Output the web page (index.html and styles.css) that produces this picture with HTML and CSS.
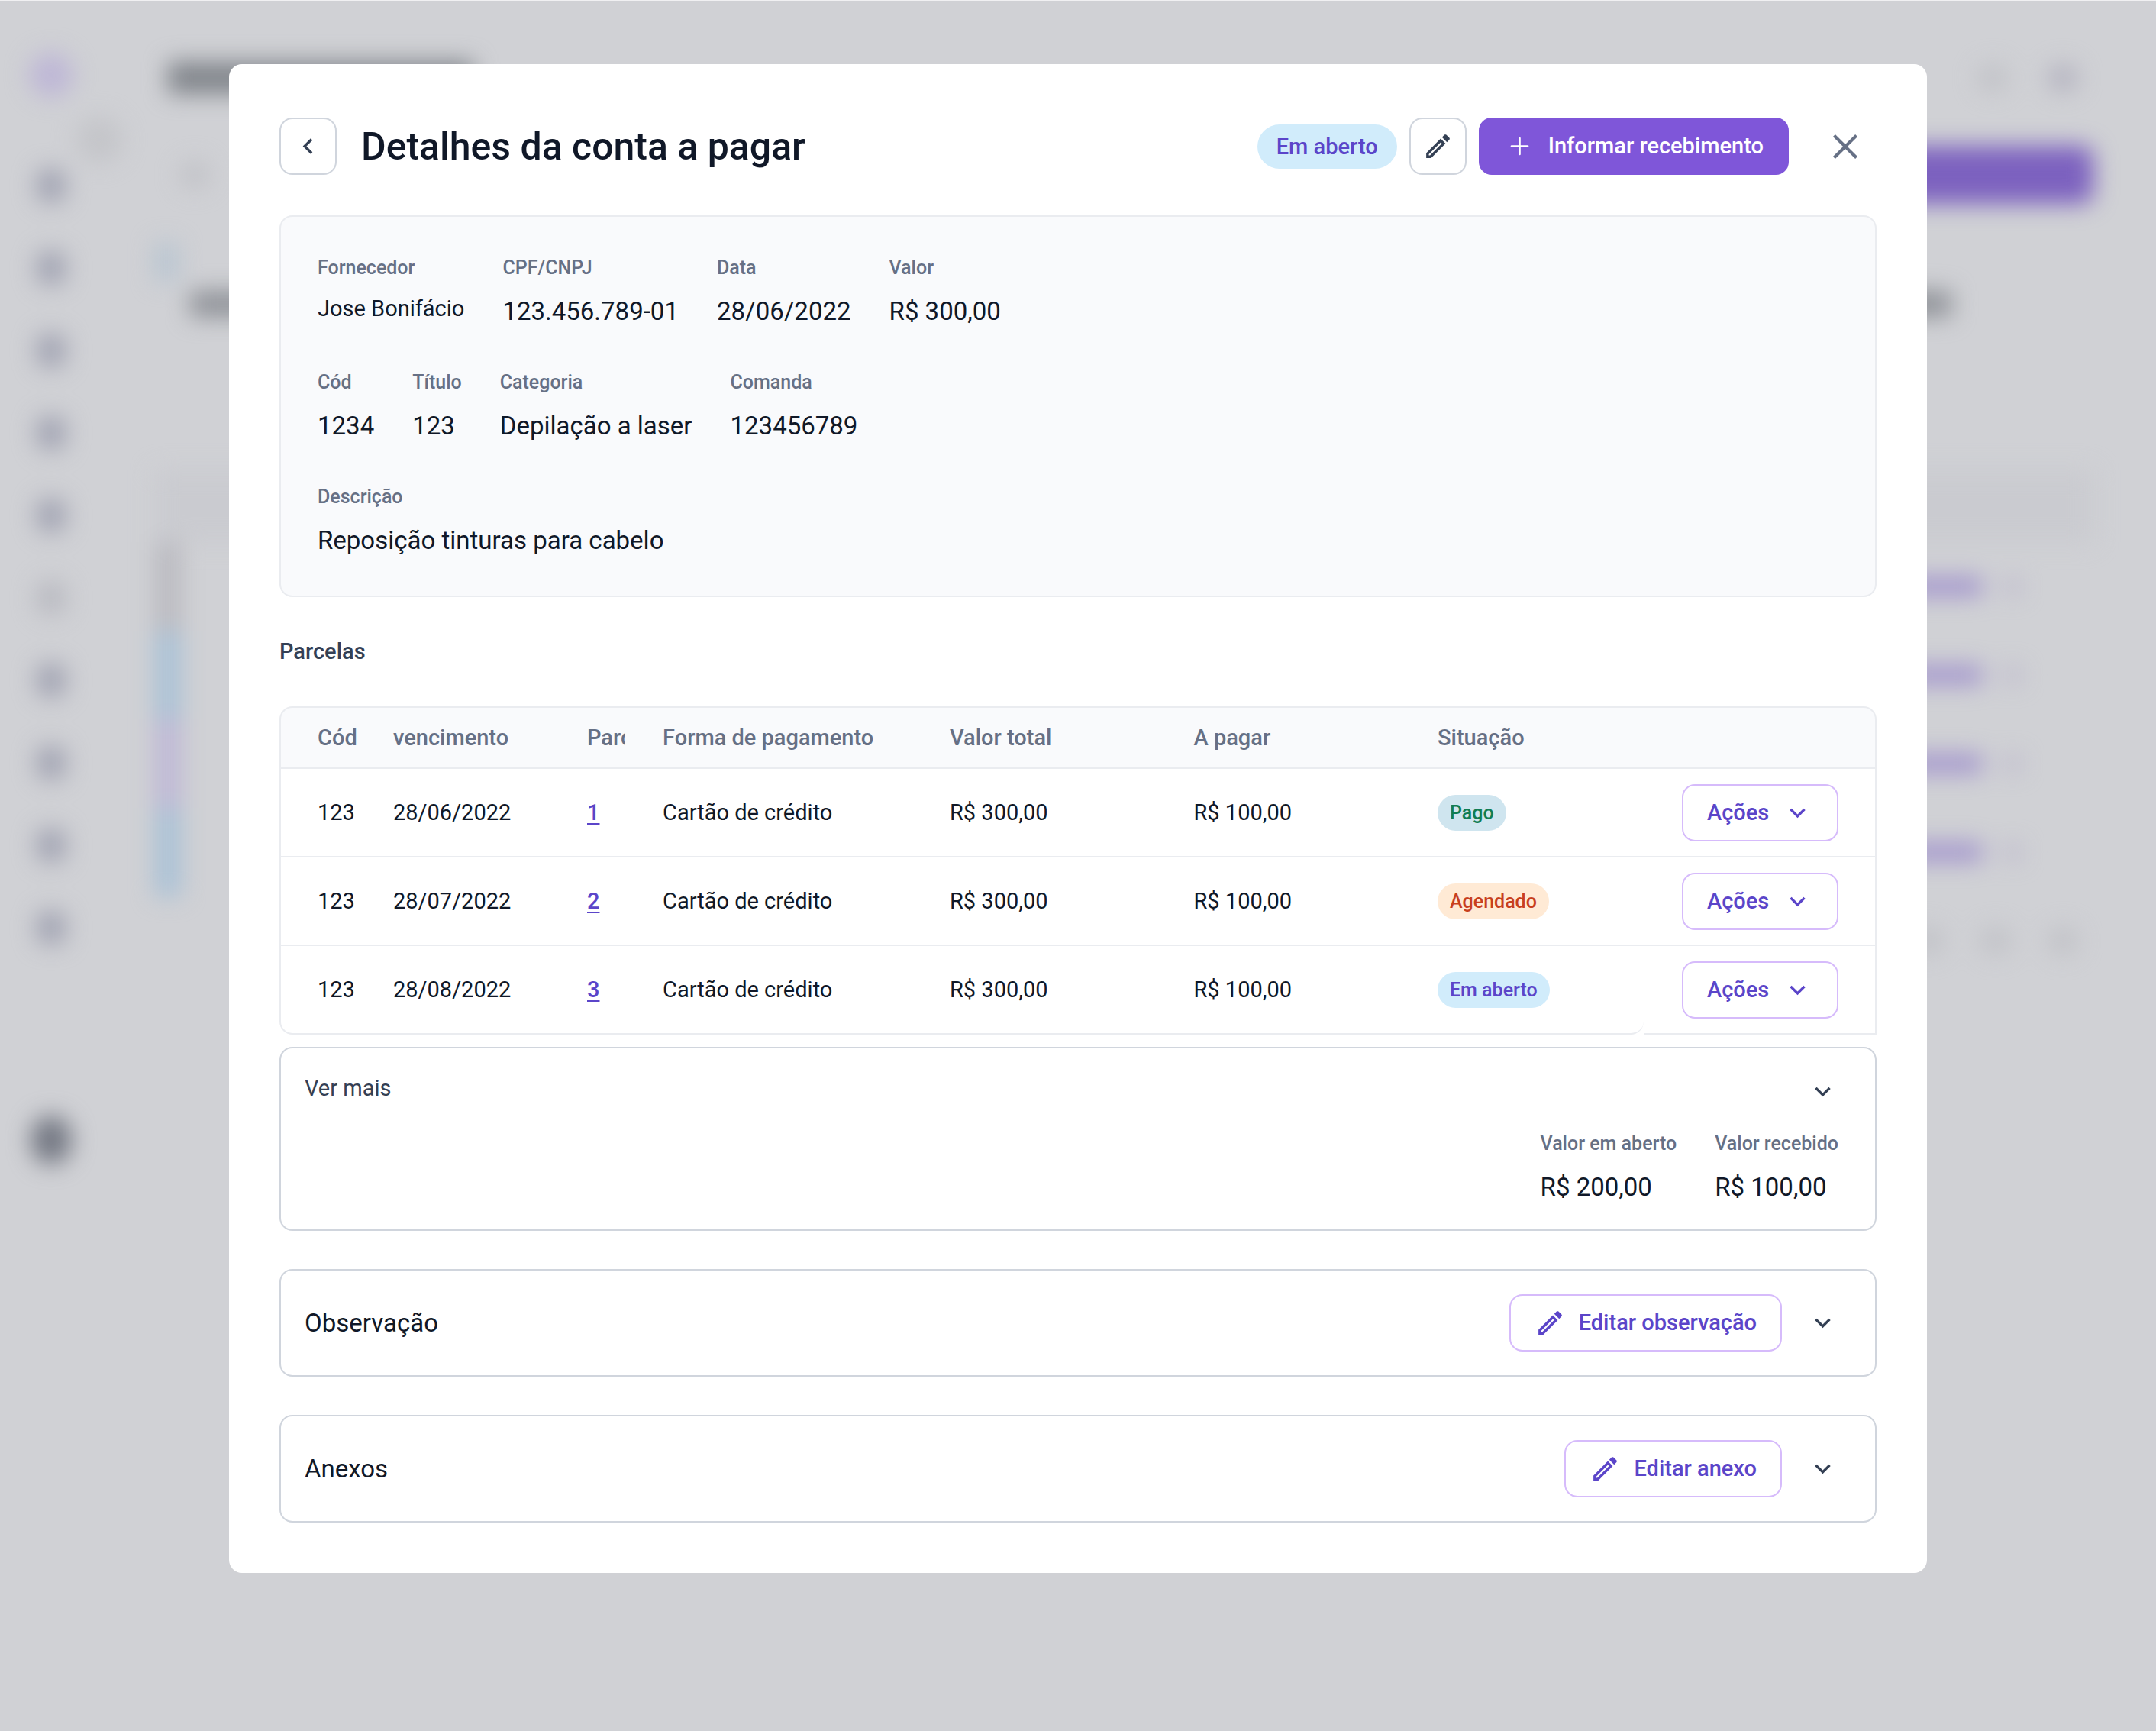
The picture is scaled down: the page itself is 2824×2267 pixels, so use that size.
FILE: index.html
```
<!DOCTYPE html>
<html lang="pt-BR">
  <head>
    <meta charset="UTF-8" />
    <meta name="viewport" content="width=device-width, initial-scale=1.0" />
    <title>Detalhes da conta a pagar</title>
    <link rel="stylesheet" href="styles.css">
  </head>
  <body>
    <!-- shared icons -->
    <svg class="sprite" aria-hidden="true">
      <symbol id="chevron" viewBox="0 0 24 24">
        <path d="M7.41 8.59 12 13.17l4.59-4.58L18 10l-6 6-6-6z" fill="currentColor" />
      </symbol>
      <symbol id="pencil" viewBox="0 0 24 24">
        <path d="M14.06 9.02l.92.92L5.92 19H5v-.92l9.06-9.06M17.66 3c-.25 0-.51.1-.7.29l-1.83 1.83 3.75 3.75 1.83-1.83c.39-.39.39-1.02 0-1.41l-2.34-2.34c-.2-.2-.45-.29-.71-.29zm-3.6 3.19L3 17.25V21h3.75L17.81 9.94l-3.75-3.75z" fill="currentColor" />
      </symbol>
    </svg>

    <div class="stage">
      <!-- page behind the dialog -->
      <div class="behind" aria-hidden="true">
        <div class="side">
          <i class="logo"></i>
          <i class="handle"></i>
          <i></i><i></i><i></i><i></i><i></i><i class="faint"></i><i></i><i></i><i></i><i></i>
          <i class="avatar"></i>
        </div>
        <div class="page">
          <div class="line topbar"><i class="heading"></i><span><i class="dot faint"></i><i class="dot"></i></span></div>
          <div class="line toolbar"><i class="dot faint"></i><i class="cta"></i></div>
          <div class="line summary"><span><i class="mark"></i><i class="amount"></i></span><i class="amount"></i></div>
          <div class="band"></div>
          <div class="line item"><i class="bar"></i><span><i class="action"></i><i class="tick"></i></span></div>
          <div class="line item"><i class="bar blue"></i><span><i class="action"></i><i class="tick"></i></span></div>
          <div class="line item"><i class="bar purple"></i><span><i class="action"></i><i class="tick"></i></span></div>
          <div class="line item"><i class="bar blue"></i><span><i class="action"></i><i class="tick"></i></span></div>
          <div class="line pager"><i class="dot faint"></i><i class="dot faint"></i><i class="dot faint"></i></div>
        </div>
      </div>

      <main class="modal" role="dialog" aria-labelledby="title">
        <header class="modal-header">
          <button type="button" class="icon-btn" aria-label="Voltar">
            <svg class="icon back"><use href="#chevron" /></svg>
          </button>
          <h1 id="title">Detalhes da conta a pagar</h1>
          <span class="badge badge-lg open">Em aberto</span>
          <button type="button" class="icon-btn" aria-label="Editar">
            <svg class="icon"><use href="#pencil" /></svg>
          </button>
          <button type="button" class="btn primary">
            <svg class="icon" viewBox="0 0 24 24"><path d="M12 5.8v12.4M5.8 12h12.4" stroke="currentColor" stroke-width="1.5" stroke-linecap="round" fill="none" /></svg>
            Informar recebimento
          </button>
          <button type="button" class="close" aria-label="Fechar">
            <svg viewBox="0 0 24 24"><path d="M5 5l14 14M19 5L5 19" stroke="currentColor" stroke-width="2" fill="none" /></svg>
          </button>
        </header>

        <section class="details">
          <dl class="fields">
            <div><dt>Fornecedor</dt><dd class="small">Jose Bonifácio</dd></div>
            <div><dt>CPF/CNPJ</dt><dd>123.456.789-01</dd></div>
            <div><dt>Data</dt><dd>28/06/2022</dd></div>
            <div><dt>Valor</dt><dd>R$ 300,00</dd></div>
          </dl>
          <dl class="fields">
            <div><dt>Cód</dt><dd>1234</dd></div>
            <div><dt>Título</dt><dd>123</dd></div>
            <div><dt>Categoria</dt><dd>Depilação a laser</dd></div>
            <div><dt>Comanda</dt><dd>123456789</dd></div>
          </dl>
          <dl class="fields">
            <div><dt>Descrição</dt><dd>Reposição tinturas para cabelo</dd></div>
          </dl>
        </section>

        <h2>Parcelas</h2>
        <table class="parcels">
          <colgroup>
            <col class="c-code"><col class="c-due"><col class="c-num"><col class="c-method"><col><col><col class="c-status"><col class="c-actions">
          </colgroup>
          <thead>
            <tr>
              <th>Cód</th>
              <th>vencimento</th>
              <th><span class="clip">Parcela</span></th>
              <th>Forma de pagamento</th>
              <th>Valor total</th>
              <th>A pagar</th>
              <th>Situação</th>
              <th></th>
            </tr>
          </thead>
          <tbody>
            <tr>
              <td>123</td>
              <td>28/06/2022</td>
              <td><a href="#">1</a></td>
              <td>Cartão de crédito</td>
              <td>R$ 300,00</td>
              <td>R$ 100,00</td>
              <td><span class="badge paid">Pago</span></td>
              <td><button type="button" class="btn outline">Ações <svg class="icon"><use href="#chevron" /></svg></button></td>
            </tr>
            <tr>
              <td>123</td>
              <td>28/07/2022</td>
              <td><a href="#">2</a></td>
              <td>Cartão de crédito</td>
              <td>R$ 300,00</td>
              <td>R$ 100,00</td>
              <td><span class="badge scheduled">Agendado</span></td>
              <td><button type="button" class="btn outline">Ações <svg class="icon"><use href="#chevron" /></svg></button></td>
            </tr>
            <tr>
              <td>123</td>
              <td>28/08/2022</td>
              <td><a href="#">3</a></td>
              <td>Cartão de crédito</td>
              <td>R$ 300,00</td>
              <td>R$ 100,00</td>
              <td><span class="badge open">Em aberto</span></td>
              <td><button type="button" class="btn outline">Ações <svg class="icon"><use href="#chevron" /></svg></button></td>
            </tr>
          </tbody>
        </table>

        <section class="panel more">
          <div class="more-head">
            <span>Ver mais</span>
            <button type="button" class="toggle" aria-label="Ver mais"><svg class="icon"><use href="#chevron" /></svg></button>
          </div>
          <dl class="fields totals">
            <div><dt>Valor em aberto</dt><dd>R$ 200,00</dd></div>
            <div><dt>Valor recebido</dt><dd>R$ 100,00</dd></div>
          </dl>
        </section>

        <section class="panel row">
          <h3>Observação</h3>
          <button type="button" class="btn outline"><svg class="icon"><use href="#pencil" /></svg> Editar observação</button>
          <button type="button" class="toggle" aria-label="Expandir observação"><svg class="icon"><use href="#chevron" /></svg></button>
        </section>

        <section class="panel row">
          <h3>Anexos</h3>
          <button type="button" class="btn outline"><svg class="icon"><use href="#pencil" /></svg> Editar anexo</button>
          <button type="button" class="toggle" aria-label="Expandir anexos"><svg class="icon"><use href="#chevron" /></svg></button>
        </section>
      </main>
    </div>
  </body>
</html>
```
FILE: styles.css
```
* {
  box-sizing: border-box;
}
body {
  margin: 0;
  font-family: Roboto, "Liberation Sans", sans-serif;
  font-size: 29px;
  line-height: 43px;
  color: #101828;
  background: #d0d1d5;
}
h1,
h2,
h3,
dl,
dd {
  margin: 0;
}
button {
  font: inherit;
  cursor: pointer;
}
.sprite {
  display: none;
}
.icon {
  display: block;
  width: 41px;
  height: 41px;
  flex: none;
}

/* dialog and page share one grid cell */
.stage {
  display: grid;
  min-height: 100vh;
  border-top: 1px solid #f0f0f2;
  border-bottom: 1px solid #e2e2e5;
}
.behind,
.modal {
  grid-area: 1 / 1;
}

/* page behind */
.behind {
  display: flex;
  overflow: hidden;
  filter: blur(15px);
}
.behind i {
  display: block;
  flex: none;
}
.side {
  position: relative;
  display: flex;
  flex-direction: column;
  align-items: center;
  gap: 64px;
  width: 134px;
  padding-top: 68px;
}
.side i {
  width: 38px;
  height: 44px;
  border-radius: 14px;
  background: #a1a3b2;
}
.side .logo {
  width: 58px;
  height: 58px;
  margin-bottom: 30px;
  border-radius: 50%;
  background: #beb7d6;
}
/* collapse handle on the sidebar edge */
.side .handle {
  position: absolute;
  top: 152px;
  right: -26px;
  width: 60px;
  height: 60px;
  border-radius: 50%;
  background: #c4c5c9;
}
.side .avatar {
  width: 54px;
  height: 64px;
  margin-top: 160px;
  border-radius: 50%;
  background: #747883;
}
.page {
  flex: 1;
  padding: 76px 82px 0 69px;
}
.line,
.line span {
  display: flex;
  align-items: center;
  justify-content: space-between;
}
.dot {
  width: 40px;
  height: 36px;
  border-radius: 50%;
  background: #b4b3c0;
}
.side .faint {
  background: #b9bac1;
}
.page .faint {
  background: #c1c2c7;
}
.topbar {
  height: 50px;
  padding: 0 20px 0 17px;
}
.topbar span {
  gap: 52px;
}
.heading {
  width: 400px;
  height: 42px;
  background: #81858b;
}
.toolbar {
  height: 76px;
  margin-top: 64px;
  padding-left: 32px;
}
.cta {
  width: 400px;
  height: 76px;
  border-radius: 16px;
  background: #7c61bf;
}
.summary {
  height: 104px;
  margin-top: 49px;
  padding-right: 186px;
}
.summary span {
  gap: 16px;
}
.mark {
  width: 30px;
  height: 50px;
  margin-bottom: 50px;
  background: #b8c5d1;
}
.amount {
  width: 100px;
  height: 34px;
  margin-top: 60px;
  background: #8e9197;
}
.band {
  height: 94px;
  margin-top: 196px;
  background: #cacbd0;
}
.item {
  height: 116px;
  padding-right: 96px;
}
.item span {
  gap: 30px;
}
.bar {
  width: 34px;
  height: 116px;
  background: #babac0;
}
.bar.blue {
  background: #a9c1d6;
}
.bar.purple {
  background: #beb8d6;
}
.action {
  width: 100px;
  height: 24px;
  background: #a092cc;
}
.tick {
  width: 20px;
  height: 20px;
  background: #bbb6cc;
}
.line.pager {
  gap: 48px;
  height: 116px;
  padding-right: 20px;
  justify-content: flex-end;
}

/* dialog */
.modal {
  align-self: start;
  margin: 83px 300px 207px;
  padding: 70px 66px 66px;
  border-radius: 17px;
  background: #fff;
  z-index: 1;
}
.modal-header {
  display: flex;
  align-items: center;
  gap: 16px;
  margin-bottom: 53px;
}
.modal-header h1 {
  flex: 1;
  padding-left: 16px;
  font-size: 50px;
  line-height: 62px;
  font-weight: 500;
}
.icon-btn {
  display: flex;
  align-items: center;
  justify-content: center;
  width: 75px;
  height: 75px;
  padding: 0;
  border: 2px solid #d0d5dd;
  border-radius: 17px;
  background: #fff;
  color: #344054;
}
.back {
  transform: rotate(90deg);
}
.btn {
  display: inline-flex;
  align-items: center;
  gap: 17px;
  height: 75px;
  padding: 0 31px;
  border: 2px solid #d6bbfb;
  border-radius: 17px;
  background: #fff;
  color: #5b45c9;
  font-weight: 500;
  white-space: nowrap;
}
.btn.primary {
  border-color: #7f56d9;
  background: #7f56d9;
  color: #fff;
}
.close {
  width: 82px;
  height: 75px;
  margin-left: 17px;
  padding: 0 16px;
  border: 0;
  background: none;
  color: #667085;
}
.close svg {
  display: block;
  width: 50px;
  height: 50px;
}
.badge {
  display: inline-block;
  padding: 5px 16px;
  border-radius: 33px;
  font-size: 25px;
  line-height: 37px;
  font-weight: 500;
  vertical-align: middle;
}
.badge-lg {
  padding: 8px 25px;
  font-size: 29px;
  line-height: 42px;
}
.badge.open {
  background: #d1ecfb;
  color: #5b45c9;
}
.badge.paid {
  background: #cfe5ef;
  color: #107d52;
}
.badge.scheduled {
  background: #ffead5;
  color: #c83f1d;
}

.details {
  display: flex;
  flex-direction: column;
  gap: 50px;
  padding: 48px;
  border: 2px solid #eaecf0;
  border-radius: 17px;
  background: #f9fafc;
}
.fields {
  display: flex;
  gap: 50px;
}
dt {
  margin-bottom: 14px;
  font-size: 25px;
  line-height: 37px;
  font-weight: 500;
  color: #667085;
}
dd {
  font-size: 33px;
  line-height: 49px;
}
dd.small {
  font-size: 29px;
  line-height: 43px;
}

h2 {
  margin: 50px 0;
  font-size: 29px;
  line-height: 43px;
  font-weight: 500;
  color: #344054;
}
.parcels {
  width: 100%;
  table-layout: fixed;
  border-collapse: separate;
  border-spacing: 0;
}
.c-code {
  width: 149px;
}
.c-due {
  width: 254px;
}
.c-num {
  width: 99px;
}
.c-method {
  width: 376px;
}
.c-status {
  width: 270px;
}
.c-actions {
  width: 305px;
}
.parcels th,
.parcels td {
  padding: 0;
  border-bottom: 2px solid #eaecf0;
  text-align: left;
  white-space: nowrap;
}
.parcels th {
  height: 82px;
  border-top: 2px solid #eaecf0;
  background: #f9fafc;
  font-weight: 500;
  color: #667085;
}
.parcels td {
  height: 116px;
}
.parcels tr > :first-child {
  padding-left: 48px;
  border-left: 2px solid #eaecf0;
}
.parcels tr > :last-child {
  padding-left: 50px;
  border-right: 2px solid #eaecf0;
}
.parcels th:first-child {
  border-top-left-radius: 17px;
}
.parcels th:last-child {
  border-top-right-radius: 17px;
}
.parcels tr:last-child td:first-child {
  border-bottom-left-radius: 17px;
}
.parcels tr:last-child td:nth-child(7) {
  border-bottom-right-radius: 17px;
}
.parcels a {
  color: #5b45c9;
  font-weight: 500;
  text-decoration-thickness: 2px;
  text-underline-offset: 4px;
}
.clip {
  display: block;
  width: 50px;
  overflow: hidden;
}
.parcels .btn {
  vertical-align: middle;
}

.panel {
  margin-top: 50px;
  padding: 31px 48px 31px 31px;
  border: 2px solid #d0d5dd;
  border-radius: 17px;
}
.panel.more {
  margin-top: 16px;
}
.more-head {
  display: flex;
  justify-content: space-between;
  margin-bottom: 25px;
  color: #344054;
}
.toggle {
  display: flex;
  align-items: center;
  height: 50px;
  padding: 0;
  border: 0;
  background: none;
  color: #344054;
}
.totals {
  justify-content: flex-end;
}
.panel.row {
  display: flex;
  align-items: center;
  gap: 33px;
}
.panel h3 {
  flex: 1;
  font-size: 33px;
  line-height: 49px;
  font-weight: 400;
}
```
